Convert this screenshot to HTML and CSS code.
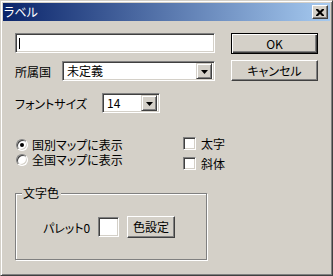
FILE: index.html
```html
<!DOCTYPE html>
<html lang="ja">
<head>
<meta charset="utf-8">
<link rel="stylesheet" href="styles.css">
</head>
<body>
<div class="window">
  <div class="titlebar">
    <span class="title">ラベル</span>
    <span class="close-btn"><svg width="8" height="7" viewBox="0 0 8 7"><path d="M0 0h2l2 2 2-2h2v1l-2.5 2.5L8 6v1H6L4 5 2 7H0V6l2.5-2.5L0 1z" fill="#000"/></svg></span>
  </div>
  <div class="client">
    <div class="left">
      <div class="textfield sunken"><span class="caret"></span></div>
      <div class="row row-country">
        <span class="label lbl-country">所属国</span>
        <div class="combo combo-country sunken">
          <span class="combo-text">未定義</span>
          <span class="combo-btn raised"><svg width="7" height="4" viewBox="0 0 7 4"><path d="M0 0h7L3.5 4z" fill="#000"/></svg></span>
        </div>
      </div>
      <div class="row row-size">
        <span class="label lbl-size">フォントサイズ</span>
        <div class="combo combo-size sunken">
          <span class="combo-text">14</span>
          <span class="combo-btn raised"><svg width="7" height="4" viewBox="0 0 7 4"><path d="M0 0h7L3.5 4z" fill="#000"/></svg></span>
        </div>
      </div>
      <div class="options">
        <div class="radios">
          <div class="radio-row"><span class="radio checked"></span><span>国別マップに表示</span></div>
          <div class="radio-row"><span class="radio"></span><span>全国マップに表示</span></div>
        </div>
        <div class="checks">
          <div class="check-row"><span class="checkbox"></span><span>太字</span></div>
          <div class="check-row"><span class="checkbox"></span><span>斜体</span></div>
        </div>
      </div>
      <fieldset class="group">
        <legend class="group-title">文字色</legend>
        <div class="group-body">
          <span class="palette-label">パレット0</span>
          <span class="swatch"></span>
          <span class="btn btn-color">色設定</span>
        </div>
      </fieldset>
    </div>
    <div class="right">
      <div class="btn btn-default">OK</div>
      <div class="btn btn-cancel">キャンセル</div>
    </div>
  </div>
</div>
</body>
</html>
```

FILE: styles.css
```css
html, body {
  margin: 0;
  padding: 0;
  background: #d4d0c8;
}
body {
  font-family: "Noto Sans CJK JP", "Noto Sans", sans-serif;
  font-size: 12px;
  color: #000;
  font-feature-settings: "palt";
}
.window {
  box-sizing: border-box;
  width: 333px;
  height: 276px;
  padding: 2px;
  border: 1px solid;
  border-color: #d4d0c8 #404040 #404040 #d4d0c8;
  box-shadow: inset 1px 1px #fff, inset -1px -1px #808080;
  background: #d4d0c8;
  display: flex;
  flex-direction: column;
}
.titlebar {
  height: 18px;
  flex: none;
  background: linear-gradient(to right, #0a246a, #a6caf0);
  display: flex;
  align-items: center;
  justify-content: space-between;
}
.title {
  color: #fff;
  padding-left: 1px;
  line-height: 18px;
}
.close-btn {
  box-sizing: border-box;
  width: 16px;
  height: 14px;
  margin-right: 2px;
  background: #d4d0c8;
  border: 1px solid;
  border-color: #fff #404040 #404040 #fff;
  box-shadow: inset -1px -1px #808080;
  display: flex;
  align-items: center;
  justify-content: center;
  padding-right: 1px;
}
.client {
  display: flex;
  padding: 12px 0 0 12px;
}
.left {
  width: 200px;
  flex: none;
  display: flex;
  flex-direction: column;
}
.right {
  margin-left: 16px;
  width: 87px;
  display: flex;
  flex-direction: column;
  gap: 6px;
}
.sunken {
  box-sizing: border-box;
  background: #fff;
  border: 1px solid;
  border-color: #808080 #fff #fff #808080;
  box-shadow: inset 1px 1px #404040, inset -1px -1px #d4d0c8;
}
.raised {
  box-sizing: border-box;
  background: #d4d0c8;
  border: 1px solid;
  border-color: #d4d0c8 #404040 #404040 #d4d0c8;
  box-shadow: inset 1px 1px #fff, inset -1px -1px #808080;
}
.textfield {
  width: 200px;
  height: 20px;
  padding: 4px 0 0 3px;
}
.caret {
  display: block;
  width: 1px;
  height: 11px;
  background: #000;
}
.row {
  display: flex;
  align-items: center;
}
.row-country {
  margin-top: 8px;
}
.row-size {
  margin-top: 12px;
}
.lbl-country {
  width: 47px;
}
.lbl-size {
  width: 87px;
}
.combo {
  height: 20px;
  display: flex;
  align-items: center;
  padding: 2px;
}
.combo-country {
  width: 153px;
}
.combo-size {
  width: 58px;
}
.combo-text {
  flex: 1;
  padding-left: 2px;
  line-height: 16px;
}
.combo-btn {
  width: 16px;
  height: 16px;
  display: flex;
  align-items: center;
  justify-content: center;
  padding-top: 1px;
}
.options {
  display: flex;
  margin-top: 24px;
  width: 240px;
}
.radios {
  width: 168px;
  flex: none;
  display: flex;
  flex-direction: column;
}
.radio-row {
  height: 15px;
  display: flex;
  align-items: center;
  line-height: 14px;
  white-space: nowrap;
}
.radio {
  box-sizing: border-box;
  width: 12px;
  height: 12px;
  margin: 0 4px 0 1px;
  border-radius: 50%;
  background: #fff;
  border: 1px solid;
  border-color: #808080 #fff #fff #808080;
  box-shadow: inset 1px 1px #404040, inset -1px -1px #d4d0c8;
  display: flex;
  align-items: center;
  justify-content: center;
}
.radio.checked::after {
  content: "";
  width: 4px;
  height: 4px;
  border-radius: 50%;
  background: #000;
}
.checks {
  flex: none;
  display: flex;
  flex-direction: column;
  gap: 7px;
}
.check-row {
  height: 13px;
  display: flex;
  align-items: center;
  line-height: 13px;
  white-space: nowrap;
}
.checkbox {
  box-sizing: border-box;
  flex: none;
  width: 13px;
  height: 13px;
  margin-right: 5px;
  background: #fff;
  border: 1px solid;
  border-color: #808080 #fff #fff #808080;
  box-shadow: inset 1px 1px #404040, inset -1px -1px #d4d0c8;
}
.group {
  box-sizing: border-box;
  width: 192px;
  height: 74px;
  margin: 16px 0 0 0;
  padding: 0;
  min-width: 0;
  border: 1px solid #808080;
  box-shadow: inset 1px 1px #fff, 1px 1px #fff;
}
.group-title {
  margin-left: 6px;
  padding: 0 2px 0 1px;
  line-height: 14px;
  background: #d4d0c8;
}
.group-body {
  display: flex;
  align-items: center;
  padding: 16px 0 0 27px;
}
.palette-label {
  width: 55px;
}
.swatch {
  box-sizing: border-box;
  width: 21px;
  height: 20px;
  background: #fff;
  border: 1px solid;
  border-color: #808080 #fff #fff #808080;
  box-shadow: inset 1px 1px #404040, inset -1px -1px #d4d0c8;
}
.btn {
  box-sizing: border-box;
  height: 21px;
  background: #d4d0c8;
  border: 1px solid;
  border-color: #fff #404040 #404040 #fff;
  box-shadow: inset -1px -1px #808080;
  display: flex;
  align-items: center;
  justify-content: center;
  line-height: 14px;
}
.btn-default {
  border-color: #000;
  box-shadow: inset 1px 1px #fff, inset -1px -1px #404040, inset -2px -2px #808080;
}
.btn-color {
  width: 48px;
  height: 22px;
  margin-left: 8px;
}
```
